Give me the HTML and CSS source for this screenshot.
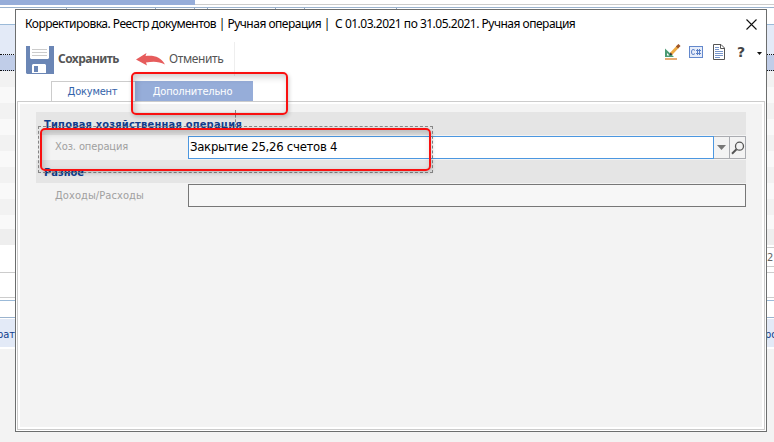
FILE: index.html
```html
<!DOCTYPE html>
<html lang="ru">
<head>
<meta charset="utf-8">
<title>Ручная операция</title>
<link rel="stylesheet" href="styles.css">
</head>
<body>
<div class="backdrop">
  <div class="bg-tabs"><div class="bg-tab"></div></div>
  <div class="bg-gap"></div>
  <div class="bg-ticks"><i></i><i></i><i></i><i></i><i></i><i></i><i></i></div>
  <div class="bg-toolbar"></div>
  <div class="bg-head"></div>
  <div class="bg-selected"></div>
  <div class="bg-stripes"></div>
  <div class="bg-shade"></div>
  <div class="bg-total"><span>2</span></div>
  <div class="bg-blank"></div>
  <div class="bg-strip"></div>
  <div class="bg-columns"><span>рат</span><span class="right">ро</span></div>
</div>

<div class="dialog">
  <header class="titlebar">
    <h1>Корректировка. Реестр документов | Ручная операция |&nbsp; С 01.03.2021 по 31.05.2021. Ручная операция</h1>
    <svg class="close" width="11" height="11" viewBox="0 0 11 11"><path d="M.5.5l10 10M10.500.5l-10 10" stroke="#111" stroke-width="1.1" fill="none"/></svg>
  </header>

  <div class="toolbar">
    <div class="action save">
      <svg width="28" height="28" viewBox="0 0 28 28">
        <path d="M0 0h28v28H1l-1-1z" fill="#6b86b5"/>
        <path d="M4 0h19v12l-1 1H5l-1-1z" fill="#fff"/>
        <path d="M6 3.500h15M6 6.500h15M6 9.500h15" stroke="#ccc"/>
        <path d="M6 27v-8l1-1h12l1 1v8z" fill="#fff"/>
        <path d="M8 20h4v6H8z" fill="#6b86b5"/>
      </svg>
      <b>Сохранить</b>
    </div>
    <div class="action cancel">
      <svg width="30" height="13" viewBox="0 0 30 13"><path d="M0 6.500L10.500 0 9.500 3C18 2 25 4 29 11.500 23 8.500 18 8 10 9.500L11 12.500z" fill="#e65c5c"/></svg>
      <span>Отменить</span>
    </div>
    <div class="separator"></div>
    <div class="tools">
      <svg width="17" height="17" viewBox="0 0 17 17">
        <path d="M1 4.500V13h9z" fill="#4b9b73"/><path d="M3 9v2.500h2.500z" fill="#fff"/>
        <path d="M1 14h12v2H1z" fill="#e6ad72"/>
        <path d="M7 10L14 2.500" stroke="#edaa43" stroke-width="3"/>
        <path d="M13 3.500L15.500 1" stroke="#9d5528" stroke-width="3"/><path d="M5.500 11.500l1-3 2 2z" fill="#333"/>
      </svg>
      <svg width="14" height="12" viewBox="0 0 14 12">
        <rect x=".5" y=".5" width="13" height="11" fill="#e7edf9" stroke="#6388cc"/>
        <path d="M6 4.500Q5 3.500 4 3.500 2.500 3.500 2.500 6T4 8.500Q5 8.500 6 7.500M8.500 3v6M10.500 3v6M7 4.500h5M7 7.500h5" fill="none" stroke="#5b80c6"/>
      </svg>
      <svg width="12" height="16" viewBox="0 0 12 16">
        <path d="M.5.5H8l3.500 3.500v11.500H.5z" fill="#fff" stroke="#555"/><path d="M7.500.5v4h4" fill="none" stroke="#555"/>
        <path d="M2 3.500h4M2 5.500h4M2 7.500h8M2 9.500h8M2 11.500h8M2 13.500h5" stroke="#7895ca"/>
      </svg>
      <b class="help">?</b>
      <svg class="menu" width="5" height="3" viewBox="0 0 5 3"><path d="M0 0h5L2.500 3z" fill="#111"/></svg>
    </div>
  </div>

  <nav class="tabs">
    <div class="tab">Документ</div>
    <div class="tab active">Дополнительно</div>
  </nav>

  <main class="panel">
    <h2><span class="t1">Типовая хозяйственная операция</span></h2>
    <div class="row">
      <label class="l1">Хоз. операция</label>
      <div class="field focus"><span>Закрытие 25,26 счетов 4</span></div>
      <div class="button drop"><svg width="9" height="5" viewBox="0 0 9 5"><path d="M0 0h9L4.500 5z" fill="#777"/></svg></div>
      <div class="button find"><svg width="14" height="14" viewBox="0 0 14 14"><circle cx="8.500" cy="5.200" r="4" fill="none" stroke="#555" stroke-width="1.300"/><path d="M5.500 8.200L1 12.700" stroke="#555" stroke-width="2"/></svg></div>
    </div>
    <h2><span class="t2">Разное</span></h2>
    <div class="row second">
      <label class="l2">Доходы/Расходы</label>
      <div class="field"></div>
    </div>
  </main>
</div>

<div class="guide"></div>
<div class="selection"></div>
<div class="mark mark-tab"></div>
<div class="mark mark-row"></div>
</body>
</html>
```
FILE: styles.css
```css
* { box-sizing: border-box; }
html, body { margin: 0; }
body {
  position: relative;
  width: 774px;
  height: 442px;
  overflow: hidden;
  background: #f3f3f3;
  font-family: "DejaVu Sans Condensed", "DejaVu Sans", sans-serif;
  font-size: 11px;
  color: #000;
}
svg { display: block; flex: none; }

/* Window behind the dialog */
.bg-tabs { height: 5px; background: #fff; border-bottom: 1px solid #ccc; }
.bg-tab { width: 195px; height: 5px; background: #96add9; }
.bg-gap { height: 3px; background: #fff; border-bottom: 1px solid #9bb3ce; }
.bg-ticks { height: 2px; background: #fff; display: grid; grid-template-columns: 67px 89px 39px 13px 68px 29px 92px 77px; }
.bg-ticks i { border-right: 1px solid #8ca5c4; }
.bg-toolbar { height: 15px; background: #fff; border-bottom: 1px solid #9bbad8; }
.bg-head { height: 30px; background: #e3eaf7; border-bottom: 1px dotted #111; }
.bg-selected { height: 16px; background: #c0cde8; border-bottom: 1px dotted #111; }
.bg-stripes { height: 158px; background: repeating-linear-gradient(#f2f2f2 0 16px, #f9f9f9 16px 32px); }
.bg-shade { height: 16px; background: #eee; }
.bg-total { height: 28px; background: #fff; border-bottom: 1px solid #ccc; display: flex; justify-content: flex-end; }
.bg-total span { width: 10px; height: 20px; margin-top: 2px; padding: 2px 0 0 3px; border-top: 1px solid #ccc; border-bottom: 1px solid #ccc; color: #666; line-height: 15px; }
.bg-blank { height: 25px; background: #fff; border-bottom: 1px solid #ccc; }
.bg-strip { height: 20px; background: linear-gradient(#fff 2px, #9bbad8 2px 3px, #fff 3px 19px, #9bb3ce 19px); }
.bg-columns { height: 31px; background: #e3eaf7; border-top: 1px solid #fff; border-bottom: 2px solid #fff; display: flex; justify-content: space-between; color: #113d8c; line-height: 32px; }
.bg-columns span { margin-left: -3px; }
.bg-columns .right { width: 9px; white-space: nowrap; }

.dialog {
  position: absolute;
  left: 15px;
  top: 9px;
  width: 752px;
  height: 423px;
  border: 1px solid #6c6e6e;
  background: #fff;
  padding: 0 1px 1px;
  display: flex;
  flex-direction: column;
}
.titlebar { height: 30px; display: flex; justify-content: space-between; padding: 8px 8px 0 8px; }
.titlebar h1 { margin: -2px 0 0; font: 12px/16px "Noto Sans", sans-serif; letter-spacing: -.5px; white-space: nowrap; }
.close { margin-top: 1px; }

.toolbar { height: 40px; display: flex; align-items: flex-start; padding: 2px 3px 0 9px; font: 12px/16px "Noto Sans", sans-serif; color: #555; }
.action { display: flex; align-items: center; height: 34px; }
.save { width: 110px; gap: 4px; }
.save svg { margin-top: 2px; }
.save b { letter-spacing: -.55px; }
.cancel { width: 98px; gap: 3px; }
.cancel span { letter-spacing: -.4px; }
.separator { width: 1px; height: 34px; background: #eee; }
.tools { flex: 1; display: flex; justify-content: flex-end; align-items: center; height: 20px; }
.tools svg + svg { margin-left: 8px; }
.tools svg:nth-child(3) { margin-left: 10px; }
.help { margin-left: 12px; width: 9px; font: bold 14px/16px "DejaVu Sans", sans-serif; color: #444; }
.tools .menu { margin: 2px 0 0 11px; }

.tabs { display: flex; height: 20px; padding-left: 34px; margin-top: 1px; }
.tab { width: 84px; padding-right: 2px; border: 1px solid #ccc; border-width: 1px 0 0 1px; text-align: center; line-height: 20px; letter-spacing: -.2px; color: #3463aa; }
.tab.active { width: 118px; height: 21px; padding-right: 3px; border: 0; background: #96add9; color: #fff; line-height: 22px; }

.panel { flex: 1; border: 1px solid #ccc; box-shadow: inset 0 0 0 2px #fff; background: #f3f3f3; padding: 10px 18px 0; }
.panel h2 { height: 23px; margin: 0 0 1px; padding-left: 8px; background: #e5e5e5; font-size: 11px; line-height: 25px; color: #113d8c; }
.t1 { letter-spacing: .21px; }
.row { display: flex; height: 23px; margin-bottom: 1px; }
.row label { width: 152px; padding-left: 19px; line-height: 21px; color: #a0a0a0; }
.l1 { letter-spacing: -.1px; }
.l2 { letter-spacing: .08px; }
.field { flex: 1; border: 1px solid #777; background: #f7f7f7; }
.focus { border-color: #4c97e0; background: #fff; padding-left: 1px; font-size: 13px; line-height: 20px; letter-spacing: -.27px; }
.button { width: 16px; border: 1px solid #aaacb1; border-left: 0; background: #f3f3f3; display: flex; align-items: center; justify-content: center; }
.row.second label { line-height: 23px; }

/* Callouts over the dialog */
.guide { position: absolute; left: 235px; top: 110px; height: 17px; border-left: 1px dashed #888; }
.selection { position: absolute; left: 38px; top: 126px; width: 395px; height: 47px; border: 1px dashed #888; }
.mark { position: absolute; border: 2px solid #f91010; border-radius: 5px; box-shadow: 1px 2px 4px rgba(0,0,0,.2), inset 2px 3px 7px rgba(0,0,0,.2); }
.mark-tab { left: 131px; top: 72px; width: 157px; height: 43px; }
.mark-row { left: 40px; top: 128px; width: 391px; height: 43px; }
```
